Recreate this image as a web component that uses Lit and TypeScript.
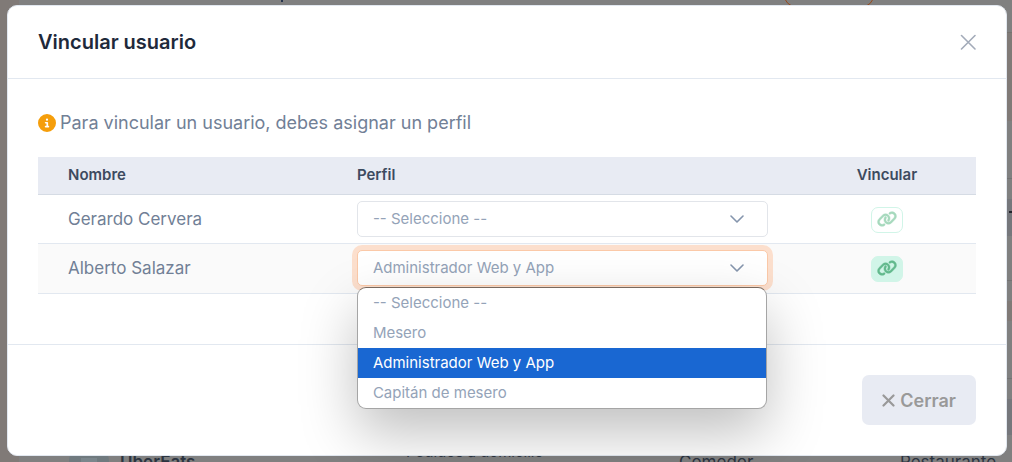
import { LitElement, html, css, svg } from "lit";
import { customElement, state } from "lit/decorators.js";

interface Usuario {
  id: number;
  nombre: string;
  perfil: string;
}

const PERFILES = ["-- Seleccione --", "Mesero", "Administrador Web y App", "Capitán de mesero"];

const infoIcon = svg`<path d="M256 512A256 256 0 1 0 256 0a256 256 0 1 0 0 512zM216 336h24V272H216c-13.3 0-24-10.7-24-24s10.7-24 24-24h48c13.3 0 24 10.7 24 24v88h8c13.3 0 24 10.7 24 24s-10.7 24-24 24H216c-13.3 0-24-10.7-24-24s10.7-24 24-24zm40-208a32 32 0 1 1 0 64 32 32 0 1 1 0-64z"/>`;

const linkIcon = svg`<path d="M579.8 267.7c56.5-56.5 56.5-148 0-204.5c-50-50-128.8-56.5-186.3-15.4l-1.6 1.1c-14.4 10.3-17.7 30.3-7.4 44.6s30.3 17.7 44.6 7.4l1.6-1.1c32.1-22.9 76-19.3 103.8 8.6c31.5 31.5 31.5 82.5 0 114L422.3 334.8c-31.5 31.5-82.5 31.5-114 0c-27.9-27.9-31.5-71.8-8.6-103.8l1.1-1.6c10.3-14.4 6.9-34.4-7.4-44.6s-34.4-6.9-44.6 7.4l-1.1 1.6C206.5 251.2 213 330 263 380c56.5 56.5 148 56.5 204.5 0L579.8 267.7zM60.2 244.3c-56.5 56.5-56.5 148 0 204.5c50 50 128.8 56.5 186.3 15.4l1.6-1.1c14.4-10.3 17.7-30.3 7.4-44.6s-30.3-17.7-44.6-7.4l-1.6 1.1c-32.1 22.9-76 19.3-103.8-8.6C74 372 74 321 105.5 289.5L217.7 177.2c31.5-31.5 82.5-31.5 114 0c27.9 27.9 31.5 71.8 8.6 103.9l-1.1 1.6c-10.3 14.4-6.9 34.4 7.4 44.6s34.4 6.9 44.6-7.4l1.1-1.6C433.5 260.8 427 182 377 132c-56.5-56.5-148-56.5-204.5 0L60.2 244.3z"/>`;

@customElement("pagina-fondo")
export class PaginaFondo extends LitElement {
  static styles = css`
    :host {
      display: flex;
      justify-content: space-between;
      overflow: hidden;
      background: #808080;
      color: #2c3440;
      font-size: 17px;
      line-height: 20px;
      white-space: nowrap;
    }
    .rail {
      flex: none;
      width: 19px;
      background: #807a77;
    }
    .content {
      flex: 1;
      display: flex;
      flex-direction: column;
      justify-content: space-between;
      min-width: 0;
    }
    .filters {
      display: flex;
      align-items: flex-end;
      justify-content: space-between;
      height: 8px;
      padding: 0 132px 0 262px;
    }
    .stem {
      align-self: flex-start;
      width: 2px;
      height: 2px;
      background: #26344d;
    }
    .pill {
      box-sizing: border-box;
      width: 92px;
      height: 30px;
      border: 1px solid #96491c;
      border-radius: 15px;
    }
    .row {
      display: grid;
      grid-template-columns: 51px 286px 273px 221px 1fr;
      grid-template-rows: 10px;
      padding-left: 50px;
    }
    .logo {
      display: flex;
      justify-content: center;
      width: 40px;
      height: 40px;
      padding-top: 6px;
      box-sizing: border-box;
      border-radius: 8px;
      background: #707a7f;
    }
    .logo::before {
      content: "";
      width: 16px;
      height: 16px;
      background: #7b868c;
    }
    .brand {
      font-weight: 600;
    }
    .channel {
      align-self: end;
      font-size: 15px;
    }
    .edge {
      flex: none;
      width: 5px;
      background: linear-gradient(
        #808080 32px, #76726f 32px 33px, #807a77 33px 121px, #808080 121px 178px,
        #737373 178px 179px, #808080 179px 199px, #76777c 199px 236px,
        #808080 236px 280px, #737373 280px 281px, #808080 281px 301px,
        #807a77 301px 321px, #808080 321px 378px, #737373 378px 379px,
        #808080 379px 399px, #76777c 399px 435px, #808080 435px
      );
    }
    .mark {
      height: 2px;
      margin: 211px 0 0 2px;
      background: #23242c;
    }
  `;

  render() {
    return html`
      <div class="rail"></div>
      <div class="content">
        <div class="filters"><span class="stem"></span><span class="pill"></span></div>
        <div class="row">
          <span class="logo"></span>
          <span class="brand">UberEats</span>
          <span class="channel">Pedidos a domicilio</span>
          <span>Comedor</span>
          <span>Restaurante</span>
        </div>
      </div>
      <div class="edge"><div class="mark"></div></div>
    `;
  }
}

@customElement("app-root")
export class AppRoot extends LitElement {
  @state() private usuarios: Usuario[] = [
    { id: 1, nombre: "Gerardo Cervera", perfil: PERFILES[0] },
    { id: 2, nombre: "Alberto Salazar", perfil: PERFILES[2] },
  ];
  @state() private abierto: number | null = 2;

  static styles = css`
    :host {
      display: grid;
      min-height: 100vh;
      font-family: Inter, "Liberation Sans", sans-serif;
      color: #718096;
    }
    * {
      box-sizing: border-box;
    }
    .page {
      grid-area: 1 / 1;
      height: 100vh;
    }
    .dialog {
      grid-area: 1 / 1;
      align-self: start;
      z-index: 1;
      margin: 5px 5px 5px 7px;
      border: 1px solid #e2e8f0;
      border-radius: 10px;
      background: #fff;
    }
    .head {
      display: flex;
      align-items: center;
      justify-content: space-between;
      height: 73px;
      padding: 0 30px;
      border-bottom: 1px solid #e2e8f0;
    }
    h1 {
      margin: 0;
      font-size: 20px;
      font-weight: 600;
      line-height: 24px;
      color: #1e293b;
    }
    button {
      display: inline-flex;
      align-items: center;
      justify-content: center;
      padding: 0;
      border: 0;
      background: none;
      font-family: inherit;
      cursor: pointer;
    }
    .close svg {
      width: 16px;
      height: 16px;
      stroke: #a3abb9;
    }
    .body {
      padding: 30px 30px 50px;
    }
    .hint {
      display: flex;
      align-items: center;
      gap: 4px;
      margin: 0 0 20px;
      font-size: 18px;
      line-height: 28px;
    }
    .hint svg {
      width: 18px;
      height: 18px;
      fill: #f59e0b;
    }
    table {
      width: 100%;
      table-layout: fixed;
      border-collapse: separate;
      border-spacing: 0;
      text-align: left;
    }
    th {
      height: 38px;
      padding: 0 0 2px;
      border-bottom: 1px solid #d5dbe4;
      background: #e8ebf3;
      font-size: 15px;
      font-weight: 600;
      line-height: 20px;
      color: #3d4a5f;
    }
    td {
      padding: 6px 0;
      border-bottom: 1px solid #e2e8f0;
      font-size: 17px;
      line-height: 24px;
    }
    tbody tr:nth-child(even) td {
      padding-bottom: 7px;
      background: #fafafa;
    }
    .name {
      width: 34%;
      padding-left: 30px;
    }
    .profile {
      width: 47%;
      padding-right: 30px;
    }
    .link {
      width: 19%;
      text-align: center;
    }
    td.link {
      padding-top: 8px;
    }
    .field {
      position: relative;
      display: flex;
    }
    select {
      width: 100%;
      height: 36px;
      padding: 0 40px 1px 15px;
      border: 1px solid #e2e5ea;
      border-radius: 5px;
      outline: 0;
      appearance: none;
      background: #fff;
      font-family: inherit;
      font-size: 15px;
      color: #94a3b8;
    }
    .open select {
      border-color: #fbc9a8;
      box-shadow: 0 0 0 5px #fcdfcd;
    }
    .chevron {
      position: absolute;
      top: 14px;
      right: 24px;
      width: 14px;
      height: 8px;
      stroke: #8595ad;
      pointer-events: none;
    }
    .menu {
      position: absolute;
      z-index: 2;
      top: calc(100% + 1px);
      left: 0;
      right: 1px;
      margin: 0;
      padding: 0;
      overflow: hidden;
      border: 1px solid #a5a5a5;
      border-top-color: #77695f;
      border-radius: 9px;
      background: #fff;
      list-style: none;
      font-size: 15px;
      line-height: 30px;
      color: #94a3b8;
      box-shadow: 0 24px 56px rgba(0, 0, 0, 0.25);
    }
    .option {
      padding: 0 15px;
      cursor: default;
    }
    .option.active {
      background: #1967d2;
      color: #fff;
    }
    .link-btn {
      width: 32px;
      height: 26px;
      padding-bottom: 2px;
      border: 1px solid #d1f5e8;
      border-radius: 7px;
      background: #d1f5e8;
      vertical-align: middle;
    }
    .link-btn svg {
      width: 20px;
      height: 16px;
      overflow: visible;
      fill: #62b98d;
      stroke: #62b98d;
      stroke-width: 14px;
    }
    .link-btn:disabled {
      background: #fff;
    }
    .link-btn:disabled svg {
      fill: #a6d9bd;
      stroke: #a6d9bd;
    }
    .foot {
      display: flex;
      justify-content: flex-end;
      padding: 30px;
      border-top: 1px solid #e2e8f0;
    }
    .cancel {
      gap: 5px;
      height: 50px;
      padding: 0 20px;
      border-radius: 7px;
      background: #e8ebf3;
      font-size: 18px;
      font-weight: 600;
      color: #999;
    }
    .cancel svg {
      width: 13px;
      height: 13px;
      stroke: #999;
    }
  `;

  private elegir(id: number, perfil: string) {
    this.usuarios = this.usuarios.map((u) => (u.id === id ? { ...u, perfil } : u));
    this.abierto = null;
  }

  private alternar(e: Event, id: number) {
    e.preventDefault();
    this.abierto = this.abierto === id ? null : id;
  }

  private menu(u: Usuario) {
    return html`<ul class="menu" role="listbox" aria-label="Perfil">
      ${PERFILES.map(
        (p) => html`<li
          class="option ${p === u.perfil ? "active" : ""}"
          role="option"
          aria-selected=${p === u.perfil}
          @click=${() => this.elegir(u.id, p)}
        >${p}</li>`
      )}
    </ul>`;
  }

  private fila(u: Usuario) {
    const abierto = this.abierto === u.id;
    return html`<tr>
      <td class="name">${u.nombre}</td>
      <td class="profile">
        <div class="field ${abierto ? "open" : ""}">
          <select
            aria-label="Perfil de ${u.nombre}"
            @mousedown=${(e: Event) => this.alternar(e, u.id)}
            @change=${(e: Event) => this.elegir(u.id, (e.target as HTMLSelectElement).value)}
          >
            ${PERFILES.map((p) => html`<option ?selected=${p === u.perfil}>${p}</option>`)}
          </select>
          <svg class="chevron" viewBox="0 0 14 8" fill="none" stroke-width="1.6" stroke-linecap="round" stroke-linejoin="round" aria-hidden="true">
            <path d="M1 1l6 6 6-6" />
          </svg>
          ${abierto ? this.menu(u) : null}
        </div>
      </td>
      <td class="link">
        <button class="link-btn" aria-label="Vincular a ${u.nombre}" ?disabled=${u.perfil === PERFILES[0]}>
          <svg viewBox="0 0 640 512" aria-hidden="true">${linkIcon}</svg>
        </button>
      </td>
    </tr>`;
  }

  render() {
    return html`
      <pagina-fondo class="page" aria-hidden="true"></pagina-fondo>
      <section class="dialog" role="dialog" aria-modal="true" aria-labelledby="titulo">
        <header class="head">
          <h1 id="titulo">Vincular usuario</h1>
          <button class="close" aria-label="Cerrar ventana">
            <svg viewBox="0 0 16 16" fill="none" stroke-width="1.6" stroke-linecap="round"><path d="M1.5 1.5l13.5 13.5M15 1.5l-13.5 13.5" /></svg>
          </button>
        </header>
        <div class="body">
          <p class="hint">
            <svg viewBox="0 0 512 512" aria-hidden="true">${infoIcon}</svg>
            <span>Para vincular un usuario, debes asignar un perfil</span>
          </p>
          <table>
            <thead>
              <tr>
                <th class="name" scope="col">Nombre</th>
                <th class="profile" scope="col">Perfil</th>
                <th class="link" scope="col">Vincular</th>
              </tr>
            </thead>
            <tbody>
              ${this.usuarios.map((u) => this.fila(u))}
            </tbody>
          </table>
        </div>
        <footer class="foot">
          <button class="cancel">
            <svg viewBox="0 0 13 13" fill="none" stroke-width="2.2" stroke-linecap="round" aria-hidden="true"><path d="M1.5 1.5l10 10M11.5 1.5l-10 10" /></svg>
            Cerrar
          </button>
        </footer>
      </section>
    `;
  }
}
